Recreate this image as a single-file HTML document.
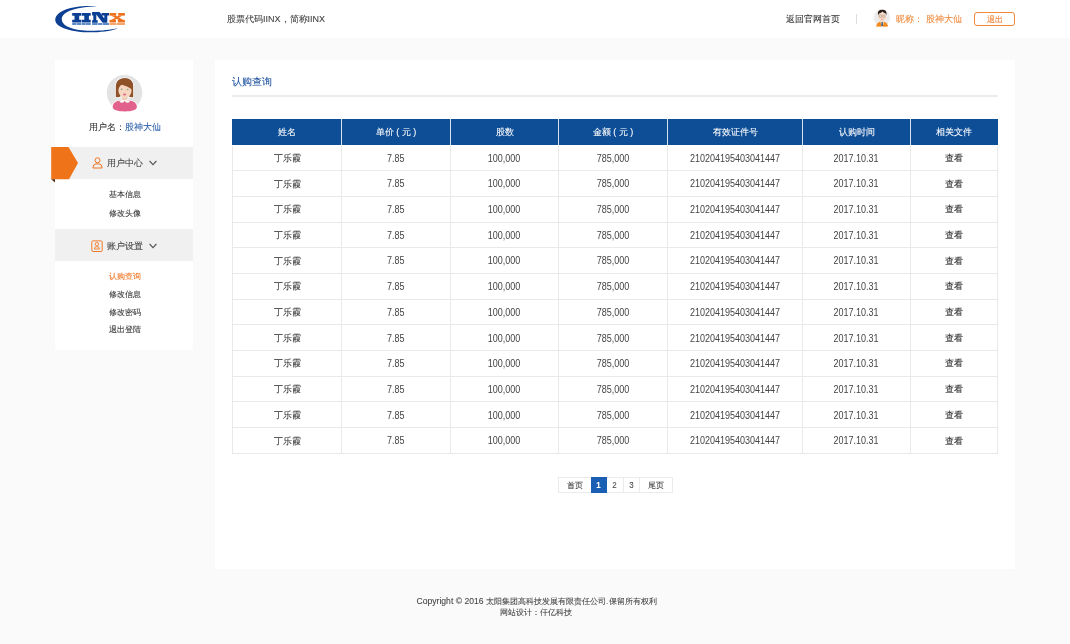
<!DOCTYPE html>
<html><head><meta charset="utf-8">
<style>
*{margin:0;padding:0;box-sizing:border-box}
html,body{width:1070px;height:644px;overflow:hidden}
body{-webkit-text-stroke:0.08px currentColor;will-change:transform;background:#fafafa;font-family:"Liberation Sans",sans-serif;color:#333;position:relative}
.abs{position:absolute}
#hdr{position:absolute;left:0;top:0;width:1070px;height:38px;background:#fff}
.t{position:absolute;white-space:nowrap;line-height:1}
#side{position:absolute;left:55px;top:60px;width:138px;height:290px;background:#fff}
#main{position:absolute;left:215px;top:60px;width:800px;height:509px;background:#fff}
table{position:absolute;left:232px;top:119px;border-collapse:collapse;table-layout:fixed;width:766px}
th,td{border:1px solid #e9e9e9;text-align:center;font-size:9px;font-weight:normal;height:25.7px;padding:0;line-height:1}
th{background:#0e4e97;color:#fff;border-color:#0e4e97 #d8e0ea #fff;height:25.6px}
th:first-child{border-left-color:#0e4e97}
th:last-child{border-right-color:#0e4e97}
td{color:#333;padding-top:1px}
td i{-webkit-text-stroke:0;color:#444;font-style:normal;display:inline-block;font-size:10px;transform:scaleX(0.9);vertical-align:top;position:relative;top:0.3px}
.pg{position:absolute;top:477px;height:16px;border:1px solid #ebebeb;font-size:8px;line-height:15px;text-align:center;color:#444;background:#fff}
.pg i.d{font-style:normal;display:inline-block;font-size:9px;transform:scaleX(0.88)}
</style></head><body>
<div id="hdr"></div>
<svg class="abs" style="left:55px;top:5px" width="72" height="28" viewBox="0 0 72 28">
  <path d="M42 1.2 C20 -0.5 1.5 5 0.3 14 C-0.8 23 19 27.8 38 27.3 C50 27 58 25.5 63 23 C56 24.8 46 25.8 36 25.8 C18 25.8 6.5 21 6.8 14 C7.2 6 22 2 42 1.2 Z" fill="#0d3f93"/>
  <g fill="#0b3f94" transform="translate(0,-0.45) scale(1,1.055)">
    <path d="M17.2 8 H26.2 V10.5 H24.2 V14.5 H26.2 V17 H17.2 V14.5 H19.5 V10.5 H17.2Z"/>
    <path d="M26.7 8 H35.7 V10.5 H33.9 V14.5 H35.7 V17 H26.7 V14.5 H29.3 V10.5 H26.7Z"/>
    <path d="M37.1 7 H44.6 L49.3 13.3 V10.3 H46.6 V8 H54 V10.3 H52.3 V17.3 H47.6 L41.3 9.5 V14.8 H42.7 V17.2 H37.1 V14.8 H38.3 V10.3 H37.1Z"/>
  </g>
  <g fill="#5f8ac8"><rect x="17.2" y="18" width="4" height="2"/><rect x="21.6" y="18" width="4.6" height="2"/><rect x="26.7" y="18" width="4" height="2"/><rect x="31.1" y="18" width="4.6" height="2"/><rect x="37.1" y="18" width="5.6" height="2"/><rect x="43.2" y="18" width="4" height="2"/><rect x="47.7" y="18" width="6.3" height="2"/></g>
  <g fill="#ee7320" transform="translate(0,-0.45) scale(1,1.055)"><rect x="54.5" y="8" width="6.7" height="2.5"/><rect x="63.2" y="8" width="6.7" height="2.5"/><rect x="54.5" y="14.5" width="6.5" height="2.5"/><rect x="62.8" y="14.5" width="7.1" height="2.5"/><path d="M56.2 10.4 H60.8 L68.3 14.6 H63.6Z"/><path d="M64 10.4 H67.6 L59.6 14.6 H56.2Z"/></g>
  <g fill="#f4a56a"><rect x="54.5" y="18" width="6.5" height="2"/><rect x="61.5" y="18" width="8.4" height="2"/></g>
</svg>
<div class="t" style="left:227px;top:14.5px;font-size:9px;color:#444">股票代码IINX，简称IINX</div>
<div class="t" style="left:785.5px;top:14.7px;font-size:9px;color:#333">返回官网首页</div>
<div class="abs" style="left:856px;top:14px;width:1px;height:10px;background:#ddd"></div>
<svg class="abs" style="left:870px;top:6px" width="24" height="24" viewBox="0 0 24 24">
  <circle cx="11.9" cy="11.5" r="8.2" fill="#ececec"/>
  <path d="M6 20.5 Q6.8 16.3 10.6 15.4 L11.5 20.8 Z" fill="#f28a1e"/>
  <path d="M18.2 20.5 Q17.4 16.3 13.6 15.4 L12.8 20.8 Z" fill="#f28a1e"/>
  <path d="M10.6 15.4 H13.6 L12.8 20.8 H11.5Z" fill="#fbfbfb"/>
  <path d="M11.6 15.8 H12.6 L12.9 19.8 L12.1 20.6 L11.3 19.8Z" fill="#1d3550"/>
  <rect x="10.8" y="13" width="2.6" height="3" fill="#f3d2bb"/>
  <ellipse cx="12.1" cy="10.6" rx="3.9" ry="4.1" fill="#f6dbc6"/>
  <path d="M8 9.2 Q7.4 5 10 4.1 Q12 3.4 14.2 3.9 Q17 4.6 16.4 9.2 Q15.8 7 13.5 6.6 L12.3 5.6 L11 6.7 Q8.8 7 8 9.2Z" fill="#2b1c16"/>
  <circle cx="10.4" cy="10.2" r="1.3" fill="none" stroke="#a89080" stroke-width="0.6"/>
  <circle cx="13.8" cy="10.2" r="1.3" fill="none" stroke="#a89080" stroke-width="0.6"/>
  <ellipse cx="12.1" cy="13.2" rx="1.1" ry="0.5" fill="#e8a090"/>
</svg>
<div class="t" style="left:896px;top:14.5px;font-size:9px;color:#f0893a">昵称： 股神大仙</div>
<div class="abs" style="left:973.5px;top:12px;width:41.5px;height:13.5px;border:1px solid #f0893a;border-radius:3px"></div>
<div class="t" style="left:987px;top:15.7px;font-size:7.5px;color:#ef7f2d">退出</div>

<div id="side"></div>
<svg class="abs" style="left:104px;top:74px" width="42" height="40" viewBox="0 0 42 40">
  <defs><clipPath id="cc"><circle cx="20.5" cy="18.8" r="17.8"/></clipPath></defs>
  <circle cx="20.5" cy="18.8" r="17.8" fill="#e3e3e3"/>
  <g>
    <path d="M7.9 33 C7.9 28 12.5 25.2 20.8 25.2 C29.1 25.2 33.7 28 33.7 33 C33.7 36.5 28.5 38.2 20.8 38.2 C13.1 38.2 7.9 36.5 7.9 33 Z" fill="#fff"/>
    <path d="M8.7 33 C8.7 28.5 13 26 20.8 26 C28.6 26 32.9 28.5 32.9 33 C32.9 36 28 37.4 20.8 37.4 C13.6 37.4 8.7 36 8.7 33 Z" fill="#e2618c"/>
    <path d="M11 23.8 L11 13 C11 6.5 15 3.4 20.8 3.4 C26.5 3.4 30 7 30 13 L30 23.8 Q26 25 23.5 23 L18 23 Q15 25 11 23.8 Z" fill="#fff"/>
    <rect x="18.3" y="21" width="4.6" height="6" fill="#f2cdb2"/>
    <path d="M15.3 26.5 Q15.5 28.9 18 28.8 Q20 28.6 20.7 26.8 Q21.4 28.6 23.4 28.8 Q25.9 28.9 26.1 26.5 Q23.5 25.8 20.7 26 Q17.9 25.8 15.3 26.5Z" fill="#fbfbf6"/>
    <path d="M11.8 23 L11.8 13 C11.8 7 15.5 4.3 20.8 4.3 C26 4.3 29.2 7.5 29.2 13 L29.2 23 Q26.5 24 24.5 22 L17 22 Q14.5 24 11.8 23 Z" fill="#8e5128"/>
    <ellipse cx="21" cy="16.8" rx="6.6" ry="7" fill="#f6d6c0"/>
    <path d="M14 12 Q15.5 10.2 18 10.8 Q24 12.2 28.2 15.5 L29.2 12 Q28.5 4.3 20.8 4.3 Q13.5 4.5 12.5 11 Z" fill="#8e5128"/>
    <ellipse cx="17.6" cy="15.2" rx="1" ry="0.7" fill="#8fa08a"/>
    <ellipse cx="23.6" cy="15.4" rx="1" ry="0.7" fill="#8fa08a"/>
    <ellipse cx="20.6" cy="20.6" rx="1.6" ry="1" fill="#e0678e"/>
  </g>
</svg>
<div class="t" style="left:89px;top:123px;font-size:9px;color:#333">用户名：<span style="color:#2a5ea8">股神大仙</span></div>

<div class="abs" style="left:55px;top:147px;width:138px;height:32px;background:#f0f0f0"></div>
<svg class="abs" style="left:51px;top:147px" width="28" height="36" viewBox="0 0 28 36">
  <path d="M0.2 0 H17.5 L27 16 L18 32.3 H0.2Z" fill="#ef7319"/>
  <path d="M0.2 32.3 H4 V35.5Z" fill="#5a2a10"/>
</svg>
<svg class="abs" style="left:91.5px;top:156.5px" width="11" height="12" viewBox="0 0 11 12">
  <circle cx="5.5" cy="3.3" r="2.5" fill="none" stroke="#ef7424" stroke-width="1"/>
  <path d="M0.9 11 Q0.9 7 4 6.9 H7 Q10.1 7 10.1 11 Z" fill="none" stroke="#ef7424" stroke-width="1" stroke-linejoin="round"/>
</svg>
<div class="t" style="left:107px;top:158.7px;font-size:9px;color:#444">用户中心</div>
<svg class="abs" style="left:148.5px;top:160px" width="8" height="6" viewBox="0 0 8 6"><path d="M0.6 1 L4 4.6 L7.4 1" fill="none" stroke="#555" stroke-width="1.1"/></svg>
<div class="t" style="left:108.5px;top:191.2px;font-size:8px;color:#333">基本信息</div>
<div class="t" style="left:108.5px;top:210.2px;font-size:8px;color:#333">修改头像</div>

<div class="abs" style="left:55px;top:229px;width:138px;height:31.5px;background:#f0f0f0"></div>
<svg class="abs" style="left:90.5px;top:239.5px" width="12" height="12" viewBox="0 0 12 12">
  <rect x="0.8" y="0.9" width="10.4" height="10.6" rx="1.3" fill="none" stroke="#ef7a2a" stroke-width="1"/>
  <circle cx="5.9" cy="4.2" r="1.7" fill="none" stroke="#ef7a2a" stroke-width="0.9"/>
  <path d="M3.3 9 Q3.3 6.6 5.9 6.6 Q8.5 6.6 8.5 9 Z" fill="none" stroke="#ef7a2a" stroke-width="0.9"/>
</svg>
<div class="t" style="left:107px;top:241.7px;font-size:9px;color:#444">账户设置</div>
<svg class="abs" style="left:148.5px;top:243px" width="8" height="6" viewBox="0 0 8 6"><path d="M0.6 1 L4 4.6 L7.4 1" fill="none" stroke="#555" stroke-width="1.1"/></svg>
<div class="t" style="left:108.5px;top:273.2px;font-size:8px;color:#ef7424">认购查询</div>
<div class="t" style="left:108.5px;top:290.7px;font-size:8px;color:#333">修改信息</div>
<div class="t" style="left:108.5px;top:308.7px;font-size:8px;color:#333">修改密码</div>
<div class="t" style="left:108.5px;top:326.2px;font-size:8px;color:#333">退出登陆</div>

<div id="main"></div>
<div class="t" style="left:232.3px;top:77.3px;font-size:10px;color:#1f53a0">认购查询</div>
<div class="abs" style="left:232px;top:95px;width:766px;height:2px;background:#ededed"></div>
<table>
<colgroup><col style="width:109px"><col style="width:109px"><col style="width:108px"><col style="width:109px"><col style="width:135px"><col style="width:108px"><col style="width:87px"></colgroup>
<tr><th>姓名</th><th>单价 ( 元 )</th><th>股数</th><th>金额 ( 元 )</th><th>有效证件号</th><th>认购时间</th><th>相关文件</th></tr>
<tr><td>丁乐霞</td><td><i>7.85</i></td><td><i>100,000</i></td><td><i>785,000</i></td><td><i>210204195403041447</i></td><td><i>2017.10.31</i></td><td>查看</td></tr>
<tr><td>丁乐霞</td><td><i>7.85</i></td><td><i>100,000</i></td><td><i>785,000</i></td><td><i>210204195403041447</i></td><td><i>2017.10.31</i></td><td>查看</td></tr>
<tr><td>丁乐霞</td><td><i>7.85</i></td><td><i>100,000</i></td><td><i>785,000</i></td><td><i>210204195403041447</i></td><td><i>2017.10.31</i></td><td>查看</td></tr>
<tr><td>丁乐霞</td><td><i>7.85</i></td><td><i>100,000</i></td><td><i>785,000</i></td><td><i>210204195403041447</i></td><td><i>2017.10.31</i></td><td>查看</td></tr>
<tr><td>丁乐霞</td><td><i>7.85</i></td><td><i>100,000</i></td><td><i>785,000</i></td><td><i>210204195403041447</i></td><td><i>2017.10.31</i></td><td>查看</td></tr>
<tr><td>丁乐霞</td><td><i>7.85</i></td><td><i>100,000</i></td><td><i>785,000</i></td><td><i>210204195403041447</i></td><td><i>2017.10.31</i></td><td>查看</td></tr>
<tr><td>丁乐霞</td><td><i>7.85</i></td><td><i>100,000</i></td><td><i>785,000</i></td><td><i>210204195403041447</i></td><td><i>2017.10.31</i></td><td>查看</td></tr>
<tr><td>丁乐霞</td><td><i>7.85</i></td><td><i>100,000</i></td><td><i>785,000</i></td><td><i>210204195403041447</i></td><td><i>2017.10.31</i></td><td>查看</td></tr>
<tr><td>丁乐霞</td><td><i>7.85</i></td><td><i>100,000</i></td><td><i>785,000</i></td><td><i>210204195403041447</i></td><td><i>2017.10.31</i></td><td>查看</td></tr>
<tr><td>丁乐霞</td><td><i>7.85</i></td><td><i>100,000</i></td><td><i>785,000</i></td><td><i>210204195403041447</i></td><td><i>2017.10.31</i></td><td>查看</td></tr>
<tr><td>丁乐霞</td><td><i>7.85</i></td><td><i>100,000</i></td><td><i>785,000</i></td><td><i>210204195403041447</i></td><td><i>2017.10.31</i></td><td>查看</td></tr>
<tr><td>丁乐霞</td><td><i>7.85</i></td><td><i>100,000</i></td><td><i>785,000</i></td><td><i>210204195403041447</i></td><td><i>2017.10.31</i></td><td>查看</td></tr>
</table>
<div class="pg" style="left:558px;width:34px">首页</div>
<div class="pg" style="left:606px;width:18px"><i class="d">2</i></div>
<div class="pg" style="left:623px;width:17px"><i class="d">3</i></div>
<div class="pg" style="left:639px;width:34px">尾页</div>
<div class="pg" style="left:591px;width:16px;background:#1b5fb5;border-color:#1b5fb5;color:#fff;font-weight:bold"><i class="d">1</i></div>
<div class="t" id="f1" style="left:416.5px;top:596.5px;font-size:8px;color:#444"><span style="font-size:8.6px">Copyright © 2016 </span>太阳集团高科技发展有限责任公司.<span style="margin-left:0.5px"></span>保留所有权利</div>
<div class="t" id="f2" style="left:499.5px;top:609px;font-size:8px;color:#444">网站设计：仟亿科技</div>
</body></html>
